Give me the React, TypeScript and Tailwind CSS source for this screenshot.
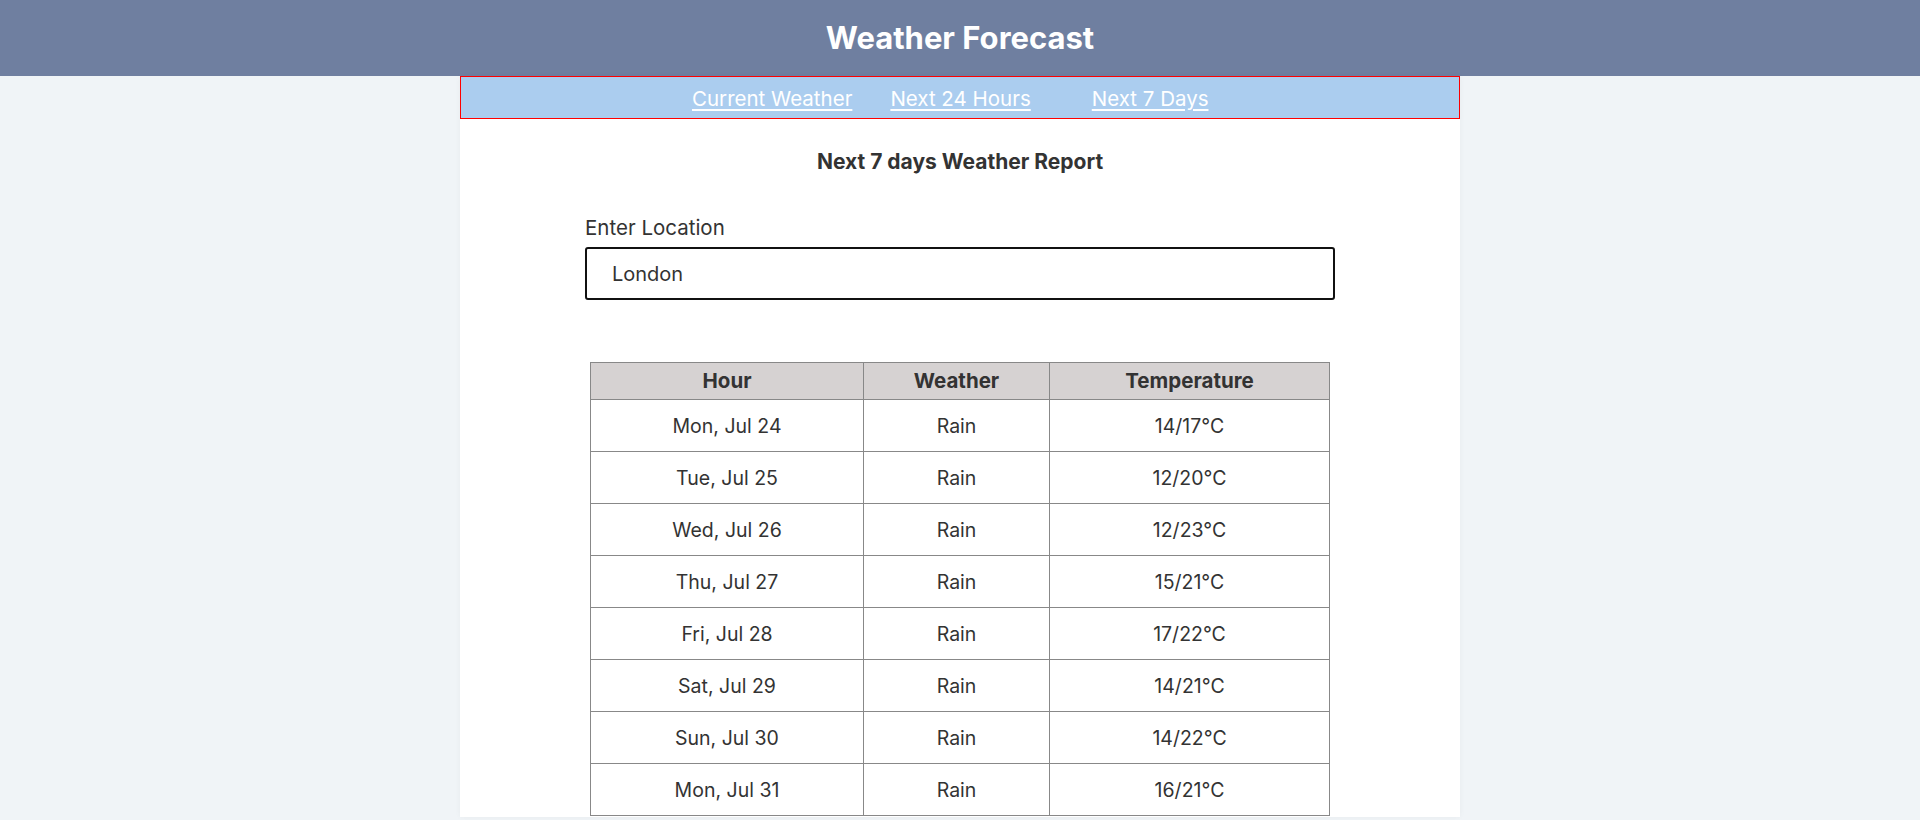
import { useState } from "react";

const days = [
  { day: "Mon, Jul 24", weather: "Rain", temp: "14/17°C" },
  { day: "Tue, Jul 25", weather: "Rain", temp: "12/20°C" },
  { day: "Wed, Jul 26", weather: "Rain", temp: "12/23°C" },
  { day: "Thu, Jul 27", weather: "Rain", temp: "15/21°C" },
  { day: "Fri, Jul 28", weather: "Rain", temp: "17/22°C" },
  { day: "Sat, Jul 29", weather: "Rain", temp: "14/21°C" },
  { day: "Sun, Jul 30", weather: "Rain", temp: "14/22°C" },
  { day: "Mon, Jul 31", weather: "Rain", temp: "16/21°C" },
];

export default function App() {
  const [location, setLocation] = useState("London");

  return (
    <div className="min-h-[820px] bg-[#f0f4f7] font-['Inter',sans-serif] text-[#333]">
      <header className="flex h-[76px] items-center justify-center bg-[#6f7fa0]">
        <h1 className="text-[31px] font-bold leading-9 text-white">Weather Forecast</h1>
      </header>

      <main className="mx-auto w-[1000px] bg-white pb-px shadow-[0_0_6px_rgba(0,0,0,0.04)]">
        <nav className="flex h-[43px] items-center border border-[#ff0000] bg-[#abcdef] pl-[231px] pt-[3px] text-[20.5px] leading-6 text-white">
          <a href="#" className="underline underline-offset-[3px]">Current Weather</a>
          <a href="#" className="ml-[38px] underline underline-offset-[3px]">Next 24 Hours</a>
          <a href="#" className="ml-[61px] underline underline-offset-[3px]">Next 7 Days</a>
        </nav>

        <h2 className="mt-[31px] text-center text-[21px] font-bold leading-6">Next 7 days Weather Report</h2>

        <div className="mx-[125px] mt-[42px]">
          <label className="block text-[20.5px] leading-6">Enter Location</label>
          <input
            className="mt-[7px] h-[53px] w-full rounded-[3px] border-2 border-[#111] pl-[25px] text-[20px] text-[#333] outline-none"
            value={location}
            onChange={(event) => setLocation(event.target.value)}
          />
        </div>

        <table className="mx-auto mt-[62px] w-[740px] border-collapse text-[19.5px] leading-6">
          <thead>
            <tr className="h-[37px] bg-[#d6d2d2]">
              <th className="w-[273px] border border-[#888] text-[20.5px] font-bold">Hour</th>
              <th className="w-[186px] border border-[#888] text-[20.5px] font-bold">Weather</th>
              <th className="border border-[#888] text-[20.5px] font-bold">Temperature</th>
            </tr>
          </thead>
          <tbody>
            {days.map((row) => (
              <tr key={row.day} className="h-[52px]">
                <td className="border border-[#888] text-center">{row.day}</td>
                <td className="border border-[#888] text-center">{row.weather}</td>
                <td className="border border-[#888] text-center">{row.temp}</td>
              </tr>
            ))}
          </tbody>
        </table>
      </main>
    </div>
  );
}
